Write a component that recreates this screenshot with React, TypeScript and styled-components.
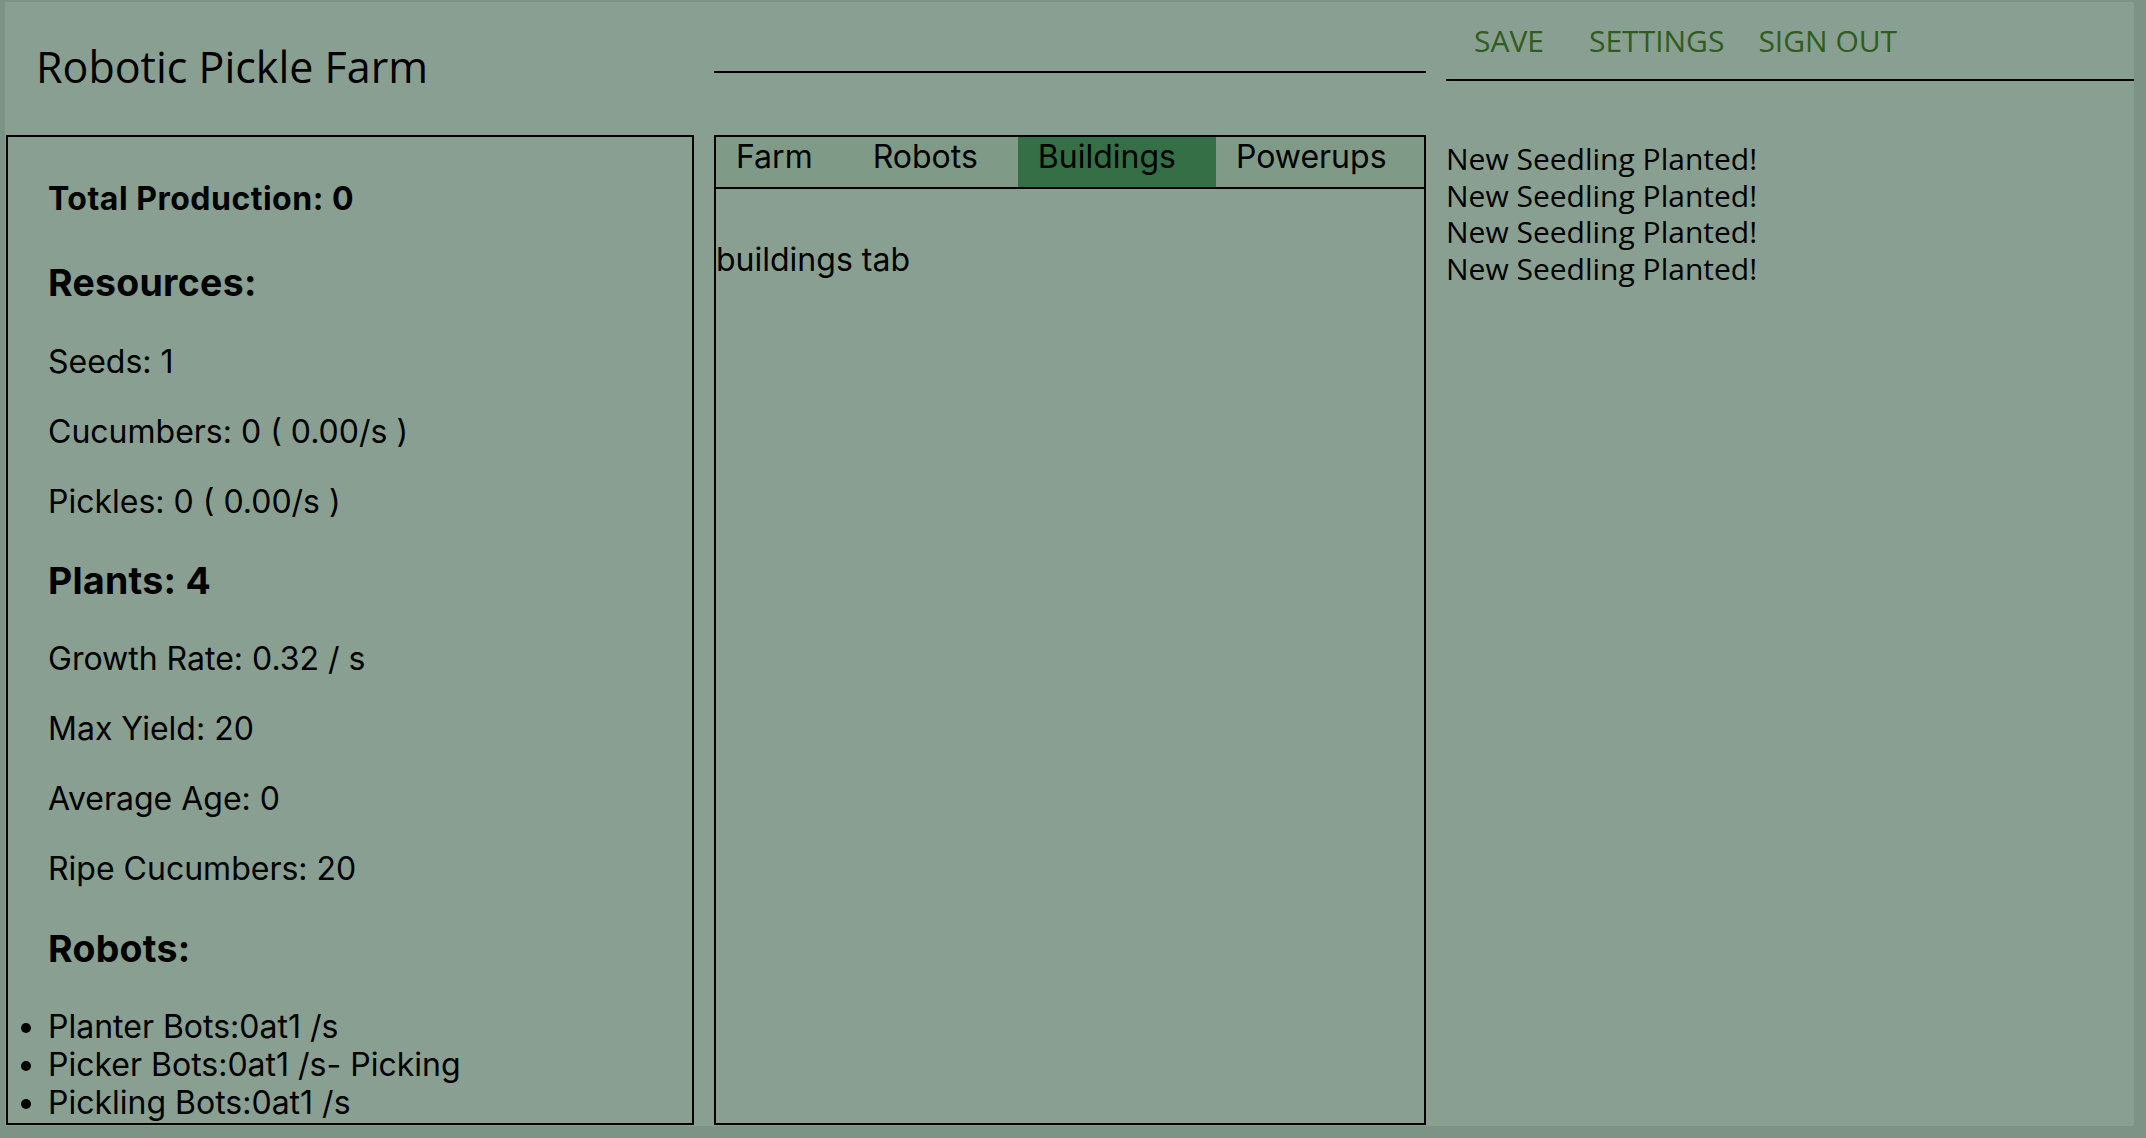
import React from "react";
import styled, { createGlobalStyle } from "styled-components";

const GlobalStyle = createGlobalStyle`
  html {
    background: #7d9386;
  }
  body {
    margin: 0;
    background: #7d9386;
  }
  * {
    box-sizing: border-box;
  }
`;

const Page = styled.div`
  margin: 2px 0 0 5px;
  width: 2129px;
  height: 1124px;
  padding-left: 1px;
  background: #889f91;
  display: grid;
  grid-template-columns: 688px 712px 688px;
  grid-template-rows: 133px 990px;
  column-gap: 20px;
  color: #000;
  overflow: hidden;
`;

const HeaderCell = styled.div`
  display: flex;
  flex-direction: column;
`;

const Title = styled.h1`
  margin: 0;
  padding: 36px 0 0 30px;
  font-family: "Open Sans", "Liberation Sans", sans-serif;
  font-weight: 400;
  font-size: 43px;
  line-height: 57px;
`;

const Rule = styled.div<{ $top: number }>`
  margin-top: ${(p) => p.$top}px;
  border-top: 2px solid #000;
  width: 100%;
`;

const Nav = styled.nav`
  display: flex;
  padding-top: 18px;
`;

const NavLink = styled.a<{ $gap: number }>`
  margin-left: ${(p) => p.$gap}px;
  font-family: "Open Sans", "Liberation Sans", sans-serif;
  font-size: 30px;
  line-height: 41px;
  color: #2f5d1d;
  text-decoration: none;
  cursor: pointer;
`;

const Panel = styled.section`
  border: 2px solid #000;
  height: 990px;
  overflow: hidden;
`;

const StatsPanel = styled(Panel)`
  padding: 0 40px;
  font-family: "Inter", "Liberation Sans", sans-serif;
`;

const SubTitle = styled.h4`
  margin: 42.56px 0;
  font-size: 32px;
  line-height: 38px;
  font-weight: 700;
  letter-spacing: 0.5px;
`;

const SectionTitle = styled.h3`
  margin: 37.44px 0;
  font-size: 37.44px;
  line-height: 45px;
  font-weight: 700;
  letter-spacing: 0.3px;
`;

const Stat = styled.p`
  margin: 32px 0;
  font-size: 32px;
  line-height: 38px;
`;

const BotList = styled.ul`
  margin: 32px 0;
  padding: 0;
  list-style: disc outside;
`;

const BotItem = styled.li`
  font-size: 32px;
  line-height: 38px;
`;

const TabPanel = styled(Panel)`
  font-family: "Inter", "Liberation Sans", sans-serif;
`;

const TabBar = styled.div`
  display: flex;
  align-items: stretch;
  height: 52px;
  background: #7f9a87;
  border-bottom: 2px solid #000;
`;

const Tab = styled.div<{ $active?: boolean }>`
  padding: 1px 40px 0 20px;
  font-size: 32px;
  line-height: 38px;
  color: #000;
  background: ${(p) => (p.$active ? "#346f46" : "transparent")};
  cursor: pointer;
`;

const TabContent = styled.div`
  padding-top: 20px;
`;

const TabText = styled.p`
  margin: 32px 0;
  font-size: 32px;
  line-height: 38px;
`;

const Log = styled.div`
  padding-top: 6px;
  font-family: "Open Sans", "Liberation Sans", sans-serif;
  font-size: 30px;
  line-height: 36.6px;
`;

const LogLine = styled.div``;

const tabs = ["Farm", "Robots", "Buildings", "Powerups"];

export default function App() {
  return (
    <>
      <GlobalStyle />
      <Page>
        <HeaderCell>
          <Title>Robotic Pickle Farm</Title>
        </HeaderCell>
        <HeaderCell>
          <Rule $top={69} />
        </HeaderCell>
        <HeaderCell>
          <Nav>
            <NavLink $gap={28}>SAVE</NavLink>
            <NavLink $gap={45}>SETTINGS</NavLink>
            <NavLink $gap={34}>SIGN OUT</NavLink>
          </Nav>
          <Rule $top={18} />
        </HeaderCell>

        <StatsPanel>
          <SubTitle>Total Production: 0</SubTitle>
          <SectionTitle>Resources:</SectionTitle>
          <Stat>Seeds: 1</Stat>
          <Stat>Cucumbers: 0 ( 0.00/s )</Stat>
          <Stat>Pickles: 0 ( 0.00/s )</Stat>
          <SectionTitle>Plants: 4</SectionTitle>
          <Stat>Growth Rate: 0.32 / s</Stat>
          <Stat>Max Yield: 20</Stat>
          <Stat>Average Age: 0</Stat>
          <Stat>Ripe Cucumbers: 20</Stat>
          <SectionTitle>Robots:</SectionTitle>
          <BotList>
            <BotItem>Planter Bots:0at1 /s</BotItem>
            <BotItem>Picker Bots:0at1 /s- Picking</BotItem>
            <BotItem>Pickling Bots:0at1 /s</BotItem>
          </BotList>
        </StatsPanel>

        <TabPanel>
          <TabBar role="tablist">
            {tabs.map((t) => (
              <Tab key={t} role="tab" $active={t === "Buildings"}>
                {t}
              </Tab>
            ))}
          </TabBar>
          <TabContent>
            <TabText>buildings tab</TabText>
          </TabContent>
        </TabPanel>

        <Log>
          {[0, 1, 2, 3].map((i) => (
            <LogLine key={i}>New Seedling Planted!</LogLine>
          ))}
        </Log>
      </Page>
    </>
  );
}
